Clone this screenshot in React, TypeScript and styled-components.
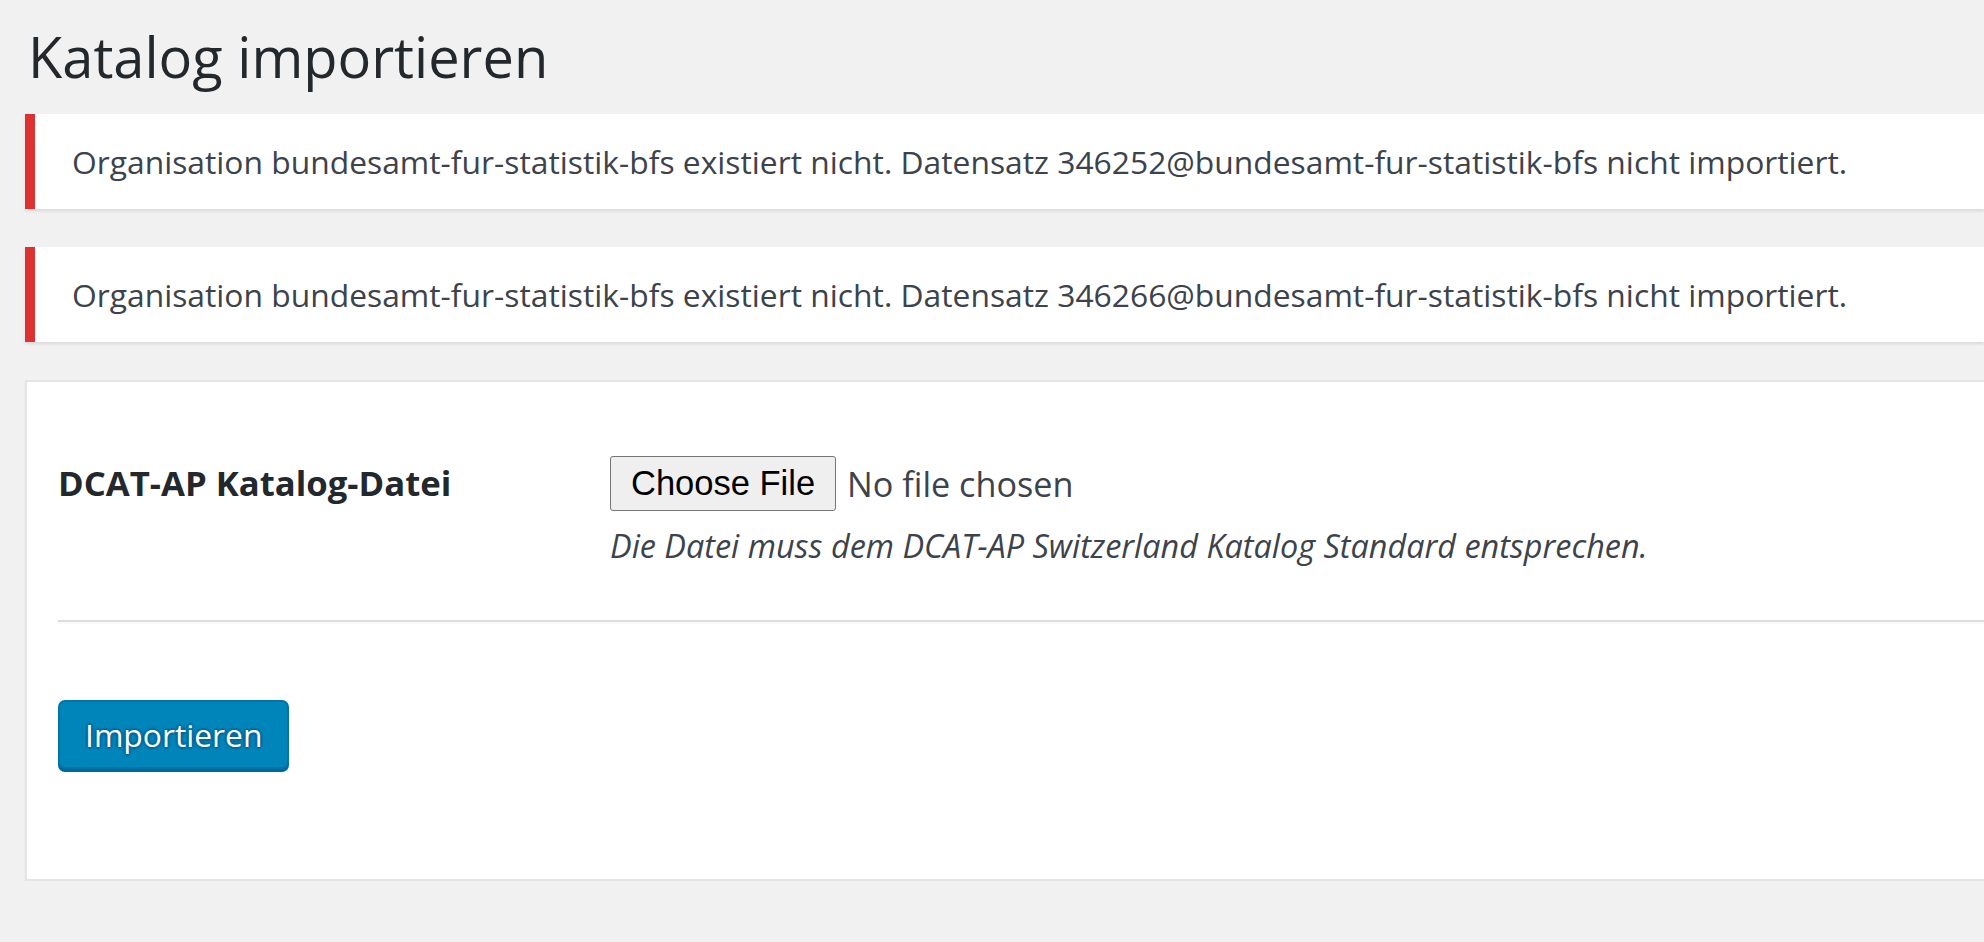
import styled, { createGlobalStyle } from "styled-components";

const GlobalStyle = createGlobalStyle`
  html, body {
    margin: 0;
    padding: 0;
    background: #f1f1f1;
    overflow: hidden;
  }
  body {
    font-family: "Open Sans", "Noto Sans", sans-serif;
    color: #444;
  }
`;

const messages = [
  "Organisation bundesamt-fur-statistik-bfs existiert nicht. Datensatz 346252@bundesamt-fur-statistik-bfs nicht importiert.",
  "Organisation bundesamt-fur-statistik-bfs existiert nicht. Datensatz 346266@bundesamt-fur-statistik-bfs nicht importiert.",
];

export default function App() {
  return (
    <>
      <GlobalStyle />
      <Wrap>
        <Title>Katalog importieren</Title>

        {messages.map((msg) => (
          <Notice key={msg}>
            <NoticeText>{msg}</NoticeText>
          </Notice>
        ))}

        <Card>
          <FormRow>
            <FieldLabel htmlFor="catalog-file">DCAT-AP Katalog-Datei</FieldLabel>
            <FieldCell>
              <FilePicker>
                <FileButton type="button" id="catalog-file">
                  Choose File
                </FileButton>
                <FileName>No file chosen</FileName>
              </FilePicker>
              <Description>Die Datei muss dem DCAT-AP Switzerland Katalog Standard entsprechen.</Description>
            </FieldCell>
          </FormRow>

          <Divider />

          <PrimaryButton type="submit">Importieren</PrimaryButton>
        </Card>
      </Wrap>
    </>
  );
}

const Wrap = styled.div`
  padding: 0 0 0 25px;
  display: flex;
  flex-direction: column;
`;

const Title = styled.h1`
  margin: 0;
  padding: 18px 0 0 3px;
  font-size: 56px;
  font-weight: 400;
  line-height: 76px;
  color: #23282d;
`;

const Notice = styled.div`
  background: #fff;
  border-left: 10px solid #dc3232;
  box-shadow: 0 2px 3px rgba(0, 0, 0, 0.1);
  padding: 21px 0 21px 37px;
  margin-top: 20px;

  & + & {
    margin-top: 38px;
  }
`;

const NoticeText = styled.p`
  margin: 0;
  font-size: 31.8px;
  line-height: 53px;
  color: #3c434a;
  white-space: nowrap;
`;

const Card = styled.div`
  margin-top: 38px;
  background: #fff;
  border: 2px solid #e2e4e7;
  border-right: none;
  box-shadow: 0 2px 2px rgba(0, 0, 0, 0.04);
  padding: 74px 0 110px 31px;
`;

const FormRow = styled.div`
  display: grid;
  grid-template-columns: 552px 1fr;
  align-items: start;
`;

const FieldLabel = styled.label`
  padding-top: 5px;
  font-size: 34.7px;
  font-weight: 700;
  line-height: 44px;
  color: #23282d;
`;

const FieldCell = styled.div`
  display: flex;
  flex-direction: column;
  gap: 13px;
`;

const FilePicker = styled.div`
  display: flex;
  align-items: center;
  gap: 11px;
`;

const FileButton = styled.button`
  height: 55px;
  padding: 0 20px;
  background: #efefef;
  border: 1px solid #767676;
  border-radius: 3px;
  font-family: "Liberation Sans", Arial, sans-serif;
  font-size: 34.5px;
  color: #000;
`;

const FileName = styled.span`
  font-size: 34.2px;
  color: #3c434a;
`;

const Description = styled.p`
  margin: 0;
  font-size: 32.4px;
  font-style: italic;
  line-height: 42px;
  color: #3c434a;
`;

const Divider = styled.hr`
  margin: 54px 0 0;
  border: 0;
  border-top: 2px solid #dcdcde;
  border-bottom: 2px solid #fafafa;
`;

const PrimaryButton = styled.button`
  align-self: flex-start;
  margin-top: 76px;
  height: 69px;
  padding: 0 25px;
  background: #0085ba;
  border: 2px solid #0073aa;
  border-radius: 7px;
  box-shadow: 0 3px 0 #006799;
  color: #fff;
  font-family: "Open Sans", "Noto Sans", sans-serif;
  font-size: 31.8px;
  text-shadow: 0 -2px 2px #006799, 2px 0 2px #006799, 0 2px 2px #006799, -2px 0 2px #006799;
  cursor: pointer;
`;
